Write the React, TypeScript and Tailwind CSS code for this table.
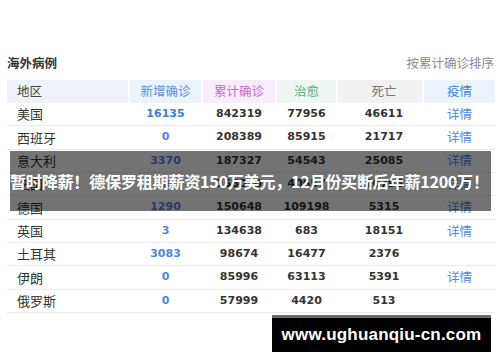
const CJK = "font-['Noto_Sans_CJK_SC','Noto_Sans',sans-serif]";
const NUM = "font-['DejaVu_Sans','Noto_Sans_CJK_SC',sans-serif]";

const COLS = 'grid grid-cols-[121px_71px_72px_59px_84px_71px] gap-x-[2px]';

type Row = {
  name: string;
  added: string;
  total: string;
  cured: string;
  dead: string;
  detail: boolean;
};

const ROWS: Row[] = [
  { name: '美国', added: '16135', total: '842319', cured: '77956', dead: '46611', detail: true },
  { name: '西班牙', added: '0', total: '208389', cured: '85915', dead: '21717', detail: true },
  { name: '意大利', added: '3370', total: '187327', cured: '54543', dead: '25085', detail: true },
  { name: '法国', added: '0', total: '158050', cured: '40657', dead: '20796', detail: true },
  { name: '德国', added: '1290', total: '150648', cured: '109198', dead: '5315', detail: true },
  { name: '英国', added: '3', total: '134638', cured: '683', dead: '18151', detail: true },
  { name: '土耳其', added: '3083', total: '98674', cured: '16477', dead: '2376', detail: false },
  { name: '伊朗', added: '0', total: '85996', cured: '63113', dead: '5391', detail: true },
  { name: '俄罗斯', added: '0', total: '57999', cured: '4420', dead: '513', detail: false },
];

export default function App() {
  return (
    <div className={`relative w-[500px] h-[362px] bg-white overflow-hidden ${CJK}`}>
      <div className="pt-[54px] pl-[7px] pr-[5px]">
        {/* title bar */}
        <div className="flex items-center justify-between h-[18px] mb-[8px]">
          <span className="text-[12.5px] font-semibold text-[#333]">海外病例</span>
          <span className="text-[12.5px] text-[#8a8a8a] pr-[1px]">按累计确诊排序</span>
        </div>

        {/* header */}
        <div className={`${COLS} h-[23px] text-[12.5px]`}>
          <div className="bg-[#eef2fa] text-[#444] flex items-center pl-[10px]">地区</div>
          <div className="bg-[#ebf3fd] text-[#5b8fdc] flex items-center justify-center">新增确诊</div>
          <div className="bg-[#f9edfb] text-[#c865dc] flex items-center justify-center">累计确诊</div>
          <div className="bg-[#edf6f0] text-[#55b27c] flex items-center justify-center">治愈</div>
          <div className="bg-[#f1f1f1] text-[#777] flex items-center justify-center pl-[8px]">死亡</div>
          <div className="bg-[#ebf3fd] text-[#3f84e4] flex items-center justify-center">疫情</div>
        </div>

        {/* rows */}
        {ROWS.map((r) => (
          <div key={r.name} className={`${COLS} h-[23.35px] border-b border-[#ececec] items-center`}>
            <div className="pl-[10px] text-[13px] text-[#333]">{r.name}</div>
            <div
              className={`text-center text-[11px] ${NUM} ${
                r.added === '16135' ? 'font-bold text-[#3c7be0]' : 'font-semibold text-[#4d86e0]'
              }`}
            >
              {r.added}
            </div>
            <div className={`text-center text-[11px] font-bold text-[#333] ${NUM}`}>{r.total}</div>
            <div className={`text-center text-[11px] font-bold text-[#333] ${NUM}`}>{r.cured}</div>
            <div className={`text-center text-[11px] font-bold text-[#333] pl-[8px] ${NUM}`}>{r.dead}</div>
            <div className="text-center text-[12.5px] text-[#4a8ae6]">{r.detail ? '详情' : ''}</div>
          </div>
        ))}
      </div>

      {/* headline banner over the table */}
      <div className="absolute left-[10px] top-[151px] w-[481px] h-[60px] bg-black/55 flex items-center">
        <span className="whitespace-nowrap text-white font-bold text-[16.2px] tracking-[-0.35px]">
          暂时降薪！德保罗租期薪资150万美元，12月份买断后年薪1200万！
        </span>
      </div>

      {/* watermark */}
      <div className="absolute left-[272px] top-[315px] w-[219px] h-[37px] bg-black border-t-[3px] border-[#6a6a6a] flex items-center justify-center">
        <span className="text-white font-bold text-[17px] font-['Liberation_Sans',sans-serif] tracking-[0.2px]">
          www.ughuanqiu-cn.com
        </span>
      </div>
    </div>
  );
}
